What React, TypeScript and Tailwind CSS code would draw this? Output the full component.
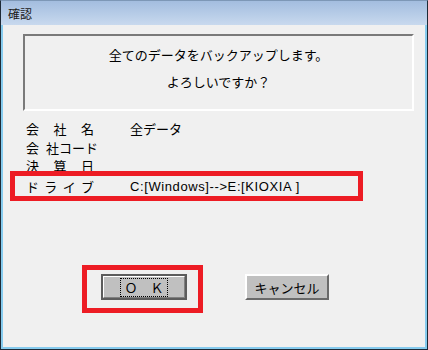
export default function App() {
  const font = { fontFamily: '"Noto Sans CJK JP", "Noto Sans", sans-serif' };

  return (
    <div
      className="relative w-[428px] h-[350px] flex flex-col border border-t-[#7d97b6] border-l-[#1e2a36] border-r-[#1e2a36] border-b-[#1e2a36] text-black"
      style={font}
    >
      {/* title bar */}
      <div className="h-[24px] flex items-center pl-[7px] pt-[2px] bg-gradient-to-b from-[#a3bddf] to-[#c8d9ee]">
        <span className="text-[12px] leading-none text-[#1a1a1a]">確認</span>
      </div>

      {/* dialog body */}
      <div className="flex-1 flex flex-col bg-[#f0f0f0] border-l-2 border-r-2 border-b-2 border-[#86cbee]">
        {/* message panel */}
        <div className="ml-[20px] mt-[9px] w-[391px] h-[77px] flex flex-col items-center border-2 border-t-[#7a7a7a] border-l-[#7a7a7a] border-r-white border-b-white text-[13px] leading-[18px]">
          <p className="pt-[10px]">全てのデータをバックアップします。</p>
          <p className="mt-[9px]">よろしいですか？</p>
        </div>

        {/* info rows */}
        <div className="ml-[23px] mt-[8px] flex flex-col text-[13px] leading-[19px]">
          <div className="flex h-[19px]">
            <div className="w-[68px] flex justify-between">
              <span>会</span>
              <span>社</span>
              <span>名</span>
            </div>
            <span className="ml-[36px]">全データ</span>
          </div>
          <div className="flex h-[18px]">
            <span>会</span>
            <span className="ml-[7px]">社コード</span>
          </div>
          <div className="flex h-[19px]">
            <div className="w-[68px] flex justify-between">
              <span>決</span>
              <span>算</span>
              <span>日</span>
            </div>
          </div>
          <div className="flex h-[19px] mt-[2px]">
            <div className="w-[68px] flex justify-between">
              <span>ド</span>
              <span>ラ</span>
              <span>イ</span>
              <span>ブ</span>
            </div>
            <span
              className="ml-[36px] tracking-[0.6px]"
              style={{ fontFamily: '"Liberation Sans", "Noto Sans CJK JP", sans-serif' }}
            >
              C:[Windows]--&gt;E:[KIOXIA ]
            </span>
          </div>
        </div>

        {/* buttons */}
        <div className="flex mt-[78px] text-[13px] leading-none">
          <div className="ml-[98px] w-[86px] h-[26px] border-2 border-[#5c5c5c]">
            <div className="w-full h-full bg-[#c0c0c0] border border-t-white border-l-white border-r-[#808080] border-b-[#808080] flex items-center justify-center">
              <div className="w-[48px] h-[19px] border border-dotted border-black flex items-center justify-center">
                Ｏ　Ｋ
              </div>
            </div>
          </div>
          <div className="ml-[58px] w-[84px] h-[26px] bg-[#c0c0c0] border-2 border-t-white border-l-white border-r-[#6a6a6a] border-b-[#6a6a6a] flex items-center justify-center">
            キャンセル
          </div>
        </div>
      </div>

      {/* red annotation frames */}
      <div className="absolute left-[9px] top-[170px] w-[353px] h-[30px] border-[5px] border-[#ed1c24]" />
      <div className="absolute left-[81px] top-[264px] w-[121px] h-[48px] border-[5px] border-[#ed1c24]" />
    </div>
  );
}
